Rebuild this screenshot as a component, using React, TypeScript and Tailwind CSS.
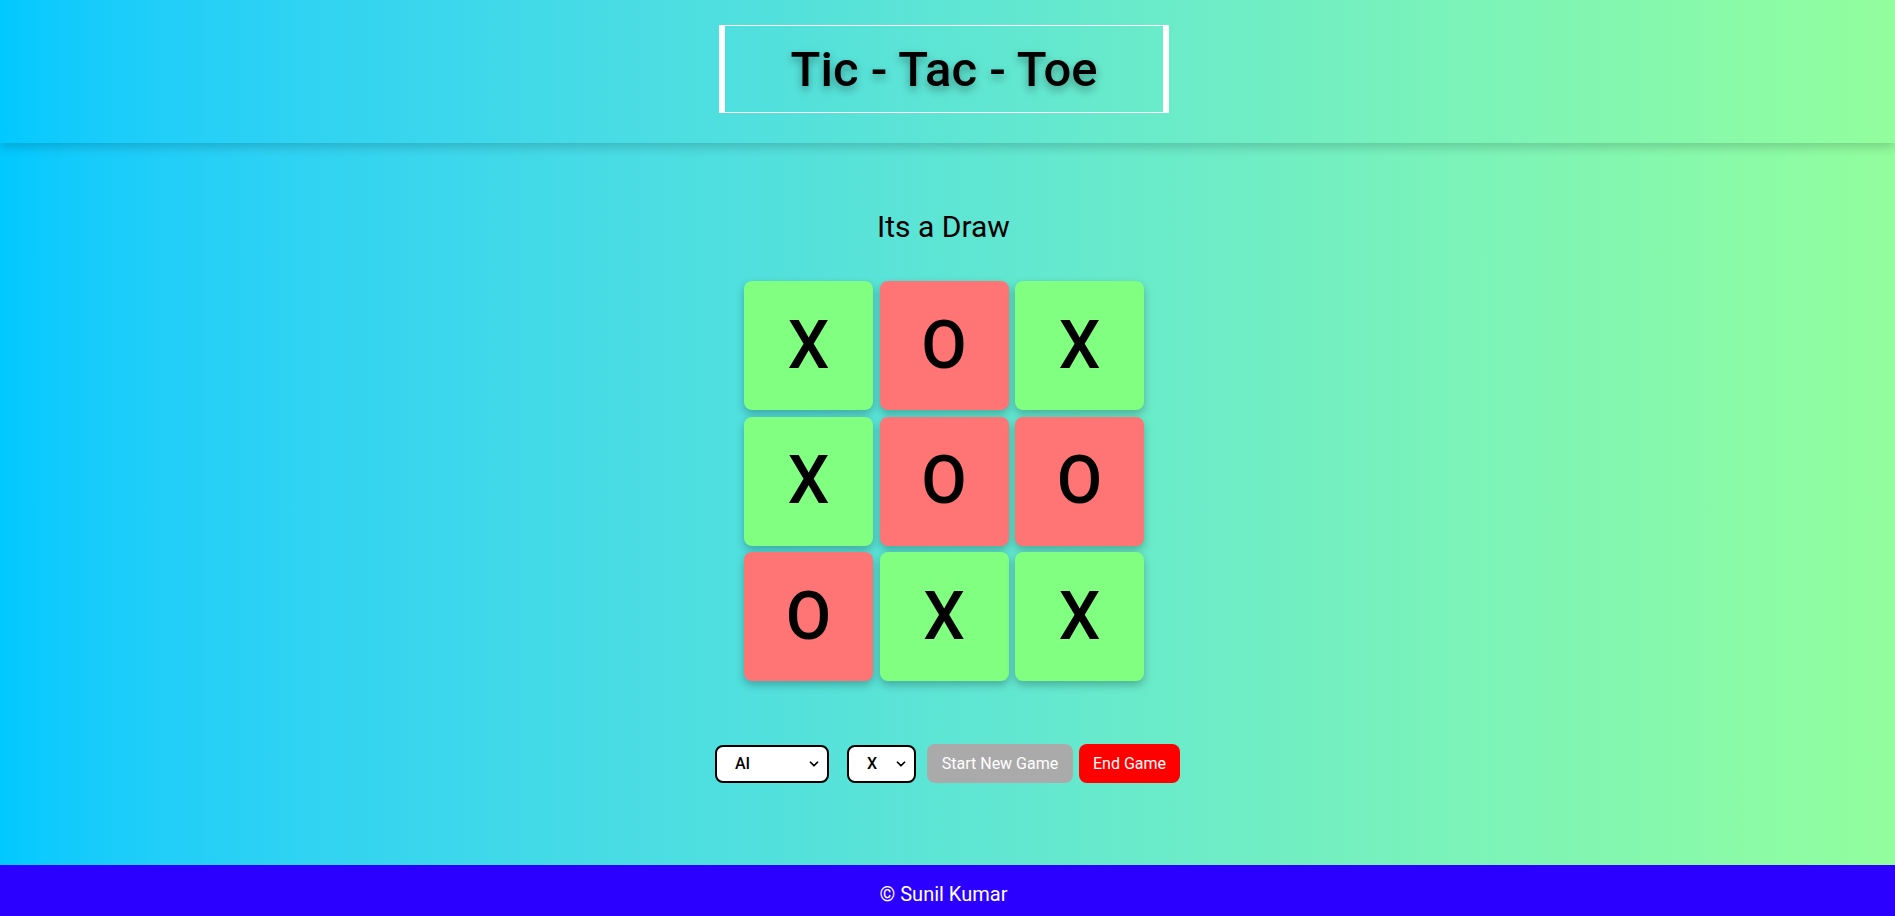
import { ChevronDown } from 'lucide-react'

const board = ['X', 'O', 'X', 'X', 'O', 'O', 'O', 'X', 'X']

function Cell({ value }: { value: string }) {
  return (
    <div
      className={`flex h-[129px] w-[129px] items-center justify-center rounded-[8px] text-[66px] font-medium leading-none shadow-[0_4px_8px_rgba(0,0,0,0.25)] ${
        value === 'X' ? 'bg-[#80ff80]' : 'bg-[#ff7575]'
      }`}
    >
      {value}
    </div>
  )
}

function Select({ value, options, className }: { value: string; options: string[]; className: string }) {
  return (
    <div className={`relative ${className}`}>
      <select
        defaultValue={value}
        className="h-[38px] w-full appearance-none rounded-[8px] border-2 border-black bg-white pl-[18px] text-[16px] font-medium"
      >
        {options.map((o) => (
          <option key={o} value={o}>
            {o}
          </option>
        ))}
      </select>
      <ChevronDown
        size={14}
        strokeWidth={3}
        className="pointer-events-none absolute top-[12px] right-[8px] text-black"
      />
    </div>
  )
}

export default function App() {
  return (
    <div className="flex min-h-screen flex-col bg-gradient-to-r from-[#00c9ff] to-[#92fe9d] font-['Roboto',sans-serif] text-black">
      <header className="relative z-10 flex h-[143px] justify-center pt-[25px] pr-[7px] shadow-[0_4px_10px_rgba(0,0,0,0.18)]">
        <div className="flex h-[88px] w-[450px] items-center justify-center border-x-[6px] border-y border-white">
          <h1 className="text-[49px] font-medium leading-none [text-shadow:0_4px_8px_rgba(0,0,0,0.35)]">
            Tic - Tac - Toe
          </h1>
        </div>
      </header>

      <main className="flex flex-1 flex-col items-center">
        <h2 className="mt-[66px] pr-[8px] text-[30px] leading-[36px]">Its a Draw</h2>

        <div className="mt-[36px] mr-[7px] grid grid-cols-3 gap-[6.5px]">
          {board.map((v, i) => (
            <Cell key={i} value={v} />
          ))}
        </div>

        <div className="mt-[63px] flex items-center text-[16px]">
          <Select value="AI" options={['AI', 'Human']} className="w-[114px]" />
          <Select value="X" options={['X', 'O']} className="ml-[18px] w-[69px]" />
          <button className="ml-[11px] h-[39px] w-[146px] rounded-[8px] bg-[#aaaaaa] text-white">
            Start New Game
          </button>
          <button className="ml-[6px] h-[39px] w-[101px] rounded-[8px] bg-[#ff0000] text-white">
            End Game
          </button>
        </div>
      </main>

      <footer className="flex h-[51px] items-center justify-center bg-[#2b00ff] pt-[7px] pr-[8px] text-[20px] text-white">
        © Sunil Kumar
      </footer>
    </div>
  )
}
